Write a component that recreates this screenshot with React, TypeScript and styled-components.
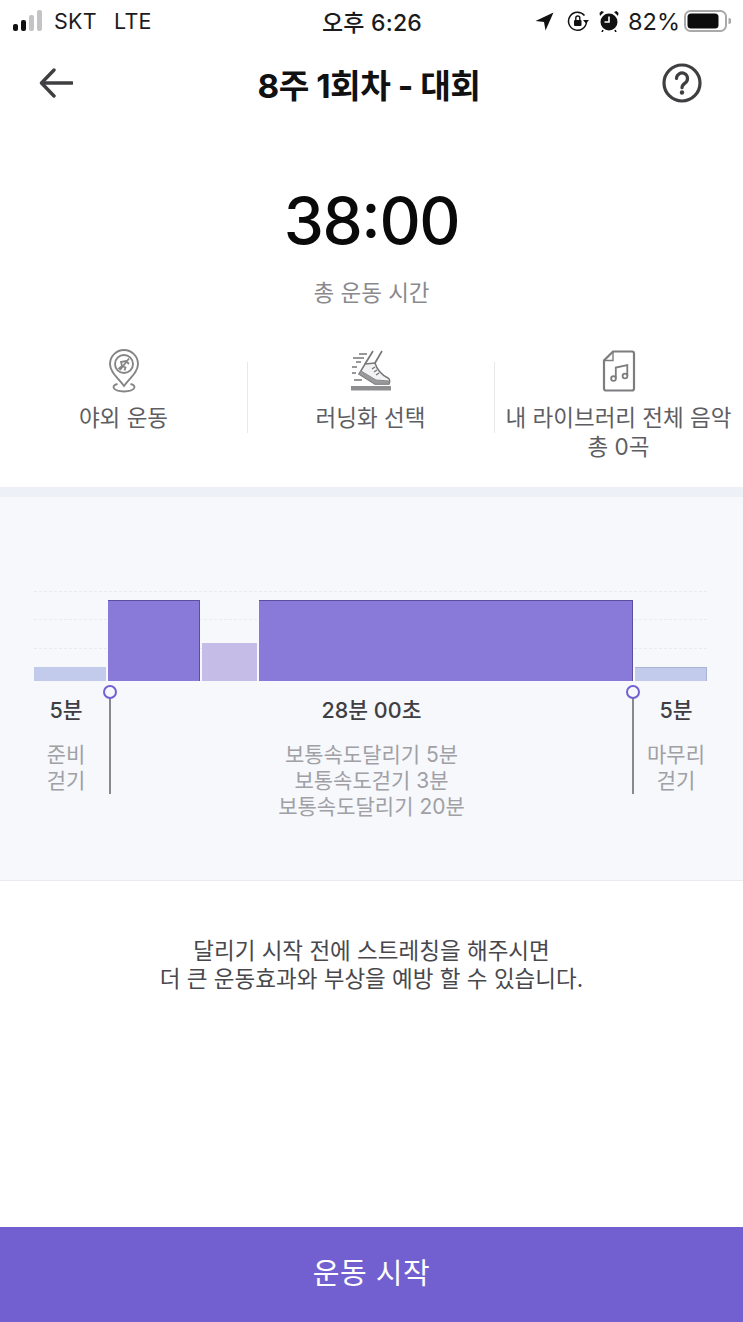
import React from "react";
import styled, { createGlobalStyle } from "styled-components";

const FONT = `Inter, "Noto Sans CJK KR", sans-serif`;

const Global = createGlobalStyle`
  html, body { margin: 0; padding: 0; background: #fff; }
  body { font-family: ${FONT}; }
  *, *::before, *::after { box-sizing: border-box; }
`;

const Page = styled.div`
  width: 743px;
  height: 1322px;
  display: flex;
  flex-direction: column;
  background: #fff;
  overflow: hidden;
`;

const StatusBar = styled.div`
  flex: none;
  height: 42px;
  padding: 0 12px 0 13px;
  display: grid;
  grid-template-columns: 1fr auto 1fr;
  align-items: center;
  color: #1b1b1d;
`;

const StatusLeft = styled.div`
  display: flex;
  align-items: center;
  gap: 7px;
  font-size: 21.5px;
  letter-spacing: 0.3px;
`;

const Carrier = styled.span`
  margin-right: 10px;
`;

const StatusTime = styled.div`
  font-weight: 500;
  font-size: 23px;
  letter-spacing: 0.2px;
`;

const StatusRight = styled.div`
  display: flex;
  align-items: center;
  justify-content: flex-end;
  font-size: 23.5px;
`;

const StatusItem = styled.span<{ $gap: number }>`
  display: flex;
  align-items: center;
  margin-right: ${(p) => p.$gap}px;
`;

const Header = styled.div`
  flex: none;
  height: 82px;
  padding: 0 41px 0 36px;
  display: flex;
  align-items: center;
  justify-content: space-between;
`;

const Title = styled.h1`
  margin: 0;
  font-size: 33.3px;
  font-weight: 700;
  letter-spacing: -0.5px;
  color: #111;
`;

const IconSlot = styled.div`
  width: 40px;
  height: 40px;
  display: flex;
  align-items: center;
  justify-content: center;
`;

const Summary = styled.div`
  flex: none;
  margin-top: 57px;
  display: flex;
  flex-direction: column;
  align-items: center;
`;

const Timer = styled.div`
  font-size: 64px;
  line-height: 80px;
  font-weight: 500;
  color: #0a0a0a;
  letter-spacing: -1.4px;
  font-feature-settings: "case";
`;

const TimerLabel = styled.div`
  margin-top: 17px;
  font-size: 22.5px;
  line-height: 30px;
  color: #8a8a8e;
`;

const Options = styled.div`
  flex: none;
  margin-top: 41px;
  height: 138px;
  display: grid;
  grid-template-columns: 247px 247px 249px;
`;

const Option = styled.div`
  position: relative;
  display: flex;
  flex-direction: column;
  align-items: center;
  text-align: center;
`;

const OptionDivider = styled.div`
  position: absolute;
  left: 0;
  top: 13px;
  width: 1px;
  height: 71px;
  background: #e8e8ea;
`;

const OptionIcon = styled.div`
  height: 44px;
  display: flex;
  align-items: center;
  justify-content: center;
`;

const OptionLabel = styled.div`
  margin-top: 10px;
  font-size: 22.5px;
  line-height: 29px;
  color: #5e5e62;
  white-space: nowrap;
`;

const Band = styled.div`
  flex: none;
  height: 10px;
  background: #edf0f6;
`;

const ChartSection = styled.div`
  flex: none;
  height: 384px;
  padding: 94px 36px 0 34px;
  background: #f6f8fc;
  border-bottom: 1px solid #e9ebf0;
`;

const Plot = styled.div`
  position: relative;
  height: 90px;
  display: flex;
  align-items: flex-end;
  gap: 2px;
`;

const GridLine = styled.div<{ $top: number }>`
  position: absolute;
  left: 0;
  right: 0;
  top: ${(p) => p.$top}px;
  border-top: 1px dashed #e9ebf1;
`;

const Bar = styled.div<{ $w: number; $h: number; $color: string; $edge?: string }>`
  position: relative;
  width: ${(p) => p.$w}px;
  height: ${(p) => p.$h}px;
  background: ${(p) => p.$color};
  border-top: 1px solid ${(p) => p.$edge || p.$color};
  border-right: 1px solid ${(p) => p.$edge || p.$color};
`;

const Details = styled.div`
  display: grid;
  grid-template-columns: 76px 523px 74px;
  text-align: center;
`;

const SideCol = styled.div<{ $right?: boolean }>`
  padding: ${(p) => (p.$right ? "15px 0 0 12px" : "15px 12px 0 0")};
`;

const MidCol = styled.div`
  position: relative;
  padding-top: 15px;
`;

const Marker = styled.div<{ $right?: boolean }>`
  position: absolute;
  top: 16px;
  ${(p) => (p.$right ? "right: 0;" : "left: 0;")}
  width: 2px;
  height: 97px;
  background: #88888e;
  margin: 0 -1px;
  &::before {
    content: "";
    position: absolute;
    left: -6px;
    top: -12px;
    width: 14px;
    height: 14px;
    border-radius: 50%;
    border: 2.5px solid #7360d0;
    background: #f6f8fc;
  }
`;

const Duration = styled.div`
  font-size: 21.5px;
  line-height: 28px;
  font-weight: 500;
  color: #3f3f43;
`;

const Desc = styled.div`
  margin-top: 18px;
  font-size: 21px;
  line-height: 26px;
  color: #a0a0a5;
`;

const Tip = styled.div`
  flex: none;
  margin-top: 56px;
  text-align: center;
  font-size: 22.5px;
  line-height: 28px;
  color: #48484c;
`;

const Spacer = styled.div`
  flex: 1;
`;

const StartButton = styled.button`
  flex: none;
  height: 95px;
  padding: 0 0 8px;
  border: 0;
  background: #7360d0;
  color: #fff;
  font-family: ${FONT};
  font-size: 29px;
  font-weight: 400;
  letter-spacing: 0.5px;
`;

const SignalBars = () => (
  <svg width="34" height="22" viewBox="0 0 34 22">
    <rect x="0" y="14" width="5" height="7" rx="2" fill="#111" />
    <rect x="8" y="10" width="5" height="11" rx="2" fill="#111" />
    <rect x="16" y="5" width="5" height="16" rx="2" fill="#c4c4c6" />
    <rect x="24" y="0" width="5" height="21" rx="2" fill="#c4c4c6" />
  </svg>
);

const LocationArrow = () => (
  <svg width="19" height="19" viewBox="0 0 19 19">
    <path d="M18.5 0.5 L0.5 9 L9 10 L10.5 18.5 Z" fill="#111" />
  </svg>
);

const RotationLock = () => (
  <svg width="22" height="22" viewBox="0 0 22 22" fill="none">
    <path d="M17.5 5.5 A9 9 0 1 0 19.5 12" stroke="#111" strokeWidth="1.5" />
    <path d="M16 10 h6 l-3 3.5 Z" fill="#111" />
    <rect x="7" y="10" width="7.5" height="6" rx="1" fill="#111" />
    <path d="M8.8 10 V8 a2 2 0 0 1 4 0 V10" stroke="#111" strokeWidth="1.4" />
  </svg>
);

const AlarmClock = () => (
  <svg width="20" height="22" viewBox="0 0 20 22">
    <circle cx="10" cy="12" r="8.5" fill="#111" />
    <path d="M10 6.5 V12 H5.5" stroke="#fff" strokeWidth="1.6" fill="none" />
    <path d="M1 6 L5 2 L2.5 1 L0.5 3 Z M19 6 L15 2 L17.5 1 L19.5 3 Z" fill="#111" />
    <path d="M4 20 L3 22 M16 20 L17 22" stroke="#111" strokeWidth="1.6" />
  </svg>
);

const Battery = () => (
  <svg width="47" height="22" viewBox="0 0 47 22">
    <rect x="1" y="1" width="41" height="20" rx="5.5" fill="none" stroke="#a9a9ab" strokeWidth="2" />
    <rect x="3.5" y="3.5" width="31" height="15" rx="3.5" fill="#0c0c0c" />
    <path d="M44.5 8 a3 3 0 0 1 0 6 Z" fill="#a9a9ab" />
  </svg>
);

const BackArrow = () => (
  <svg width="34" height="30" viewBox="0 0 34 30" fill="none" stroke="#3f3f42" strokeWidth="3.4" strokeLinecap="round" strokeLinejoin="round">
    <path d="M33 15 H3" />
    <path d="M15 2 L2.5 15 L15 28" />
  </svg>
);

const HelpIcon = () => (
  <svg width="40" height="40" viewBox="0 0 40 40" fill="none">
    <circle cx="20" cy="20" r="18" stroke="#3f3f42" strokeWidth="3.2" />
    <path d="M14.5 15.5 a5.5 5.5 0 1 1 8.5 4.6 c-2 1.4 -3 2.3 -3 4.6" stroke="#3f3f42" strokeWidth="3.2" strokeLinecap="round" />
    <circle cx="20" cy="29.5" r="2.2" fill="#3f3f42" />
  </svg>
);

const PinIcon = () => (
  <svg width="32" height="44" viewBox="0 0 32 44" fill="none" stroke="#858587" strokeWidth="1.9">
    <path d="M16 37 C10 29 2 23 2 15 A14 14 0 0 1 30 15 C30 23 22 29 16 37 Z" />
    <circle cx="16" cy="15" r="9" />
    <path d="M9.5 35 C3 36.5 4 42 16 42.5 C28 42 29 36.5 22.5 35" />
    <path d="M10.5 20 L14 17 L13 13 L18 12 L21 15 M14 17 L17.5 18.5 L16.5 21.5 M21 9.5 L12 21" strokeWidth="1.8" />
  </svg>
);

const ShoeIcon = () => (
  <svg width="40" height="42" viewBox="0 0 40 42" fill="none" stroke="#77777a" strokeWidth="1.5">
    <path d="M22 1 L14 14 M31 1 L24 13" strokeWidth="1.7" />
    <path d="M14 14 L24 13 C26 20 31 25 37 28 C39 29 39 32 38 34 L24 34 L8 24 Z" fill="#f2f2f3" />
    <path d="M8 24 L24 34 L38 34 L38 31 L25 30 L10 21 Z" fill="#9a9a9c" stroke="#8a8a8c" strokeWidth="1" />
    <path d="M21 19 L24 17 M23 22 L26 20 M25 25 L28 23" strokeWidth="1.3" />
    <path d="M8 4 H16 M2 8 H13 M5 12 H10 M1 17 H6 M1 23 H5 M3 30 H11" strokeWidth="1.4" />
    <rect x="0" y="36" width="40" height="4.5" fill="#8f8f91" stroke="none" />
  </svg>
);

const MusicFileIcon = () => (
  <svg width="34" height="42" viewBox="0 0 34 42" fill="none" stroke="#7d7d80" strokeWidth="2.2">
    <path d="M11 1.5 H30 a2 2 0 0 1 2 2 V38.5 a2 2 0 0 1 -2 2 H4 a2 2 0 0 1 -2 -2 V10.5 Z" />
    <path d="M11 1.5 V10.5 H2" strokeWidth="1.4" />
    <circle cx="11.5" cy="28.5" r="2.4" strokeWidth="1.8" />
    <circle cx="23" cy="26" r="2.4" strokeWidth="1.8" />
    <path d="M13.8 28 V17.5 L25.3 15 V25.5" strokeWidth="1.8" />
  </svg>
);

const BARS = [
  { w: 72, h: 14, color: "#c2cbec", edge: "#c2cbec" },
  { w: 92, h: 81, color: "#8979d8", edge: "#5c4f9f" },
  { w: 55, h: 38, color: "#c5bde8", edge: "#c5bde8" },
  { w: 374, h: 81, color: "#8979d8", edge: "#5c4f9f" },
  { w: 72, h: 14, color: "#c2cbec", edge: "#a9b3d6" },
];

export default function App() {
  return (
    <Page>
      <Global />
      <StatusBar>
        <StatusLeft>
          <SignalBars />
          <Carrier>SKT</Carrier>
          <span>LTE</span>
        </StatusLeft>
        <StatusTime>오후 6:26</StatusTime>
        <StatusRight>
          <StatusItem $gap={13}>
            <LocationArrow />
          </StatusItem>
          <StatusItem $gap={10}>
            <RotationLock />
          </StatusItem>
          <StatusItem $gap={9}>
            <AlarmClock />
          </StatusItem>
          <StatusItem $gap={4}>82%</StatusItem>
          <Battery />
        </StatusRight>
      </StatusBar>
      <Header>
        <IconSlot>
          <BackArrow />
        </IconSlot>
        <Title>8주 1회차 - 대회</Title>
        <IconSlot>
          <HelpIcon />
        </IconSlot>
      </Header>
      <Summary>
        <Timer>38:00</Timer>
        <TimerLabel>총 운동 시간</TimerLabel>
      </Summary>
      <Options>
        <Option>
          <OptionIcon>
            <PinIcon />
          </OptionIcon>
          <OptionLabel>야외 운동</OptionLabel>
        </Option>
        <Option>
          <OptionDivider />
          <OptionIcon>
            <ShoeIcon />
          </OptionIcon>
          <OptionLabel>러닝화 선택</OptionLabel>
        </Option>
        <Option>
          <OptionDivider />
          <OptionIcon>
            <MusicFileIcon />
          </OptionIcon>
          <OptionLabel>
            내 라이브러리 전체 음악
            <br />총 0곡
          </OptionLabel>
        </Option>
      </Options>
      <Band />
      <ChartSection>
        <Plot>
          <GridLine $top={0} />
          <GridLine $top={28} />
          <GridLine $top={57} />
          {BARS.map((b, i) => (
            <Bar key={i} $w={b.w} $h={b.h} $color={b.color} $edge={b.edge} />
          ))}
        </Plot>
        <Details>
          <SideCol>
            <Duration>5분</Duration>
            <Desc>
              준비
              <br />
              걷기
            </Desc>
          </SideCol>
          <MidCol>
            <Marker />
            <Marker $right />
            <Duration>28분 00초</Duration>
            <Desc>
              보통속도달리기 5분
              <br />
              보통속도걷기 3분
              <br />
              보통속도달리기 20분
            </Desc>
          </MidCol>
          <SideCol $right>
            <Duration>5분</Duration>
            <Desc>
              마무리
              <br />
              걷기
            </Desc>
          </SideCol>
        </Details>
      </ChartSection>
      <Tip>
        달리기 시작 전에 스트레칭을 해주시면
        <br />더 큰 운동효과와 부상을 예방 할 수 있습니다.
      </Tip>
      <Spacer />
      <StartButton>운동 시작</StartButton>
    </Page>
  );
}
